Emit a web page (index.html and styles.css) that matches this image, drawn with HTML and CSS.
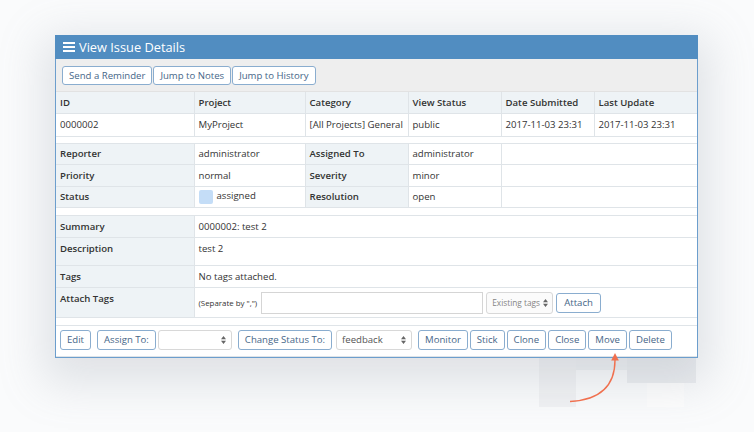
FILE: index.html
```html
<!DOCTYPE html>
<html lang="en">

<head>
  <meta charset="UTF-8">
  <meta name="viewport" content="width=device-width, initial-scale=1.0">
  <link rel="stylesheet" href="styles.css">
  <title>View Issue Details</title>
</head>

<body>
  <div class="blocks">
    <span class="blk b1"></span>
    <span class="blk b2"></span>
    <span class="blk b3"></span>
    <span class="blk b4"></span>
  </div>

  <div class="widget">
    <div class="widgetHeader">
      <svg class="menuIcon" width="12" height="10" viewBox="0 0 12 10">
        <rect x="0" y="0" width="12" height="2" fill="#fff"/>
        <rect x="0" y="4" width="12" height="2" fill="#fff"/>
        <rect x="0" y="8" width="12" height="2" fill="#fff"/>
      </svg>
      <span class="title">View Issue Details</span>
    </div>

    <div class="toolbar">
      <span class="btn">Send a Reminder</span>
      <span class="btn">Jump to Notes</span>
      <span class="btn">Jump to History</span>
    </div>

    <table class="details">
      <colgroup>
        <col style="width:138px">
        <col style="width:111px">
        <col style="width:103px">
        <col style="width:93px">
        <col style="width:93px">
        <col>
      </colgroup>
      <tr class="r21">
        <th>ID</th>
        <th>Project</th>
        <th>Category</th>
        <th>View Status</th>
        <th>Date Submitted</th>
        <th>Last Update</th>
      </tr>
      <tr class="r23">
        <td>0000002</td>
        <td>MyProject</td>
        <td>[All Projects] General</td>
        <td>public</td>
        <td>2017-11-03 23:31</td>
        <td>2017-11-03 23:31</td>
      </tr>
      <tr class="spacer s7"><td colspan="6"></td></tr>
      <tr class="r21">
        <th>Reporter</th>
        <td>administrator</td>
        <th>Assigned To</th>
        <td>administrator</td>
        <td colspan="2"></td>
      </tr>
      <tr class="r22">
        <th>Priority</th>
        <td>normal</td>
        <th>Severity</th>
        <td>minor</td>
        <td colspan="2"></td>
      </tr>
      <tr class="r21">
        <th>Status</th>
        <td><span class="swatch"></span>assigned</td>
        <th>Resolution</th>
        <td>open</td>
        <td colspan="2"></td>
      </tr>
      <tr class="spacer s8"><td colspan="6"></td></tr>
      <tr class="r22">
        <th>Summary</th>
        <td colspan="5">0000002: test 2</td>
      </tr>
      <tr class="r28 top">
        <th>Description</th>
        <td colspan="5">test 2</td>
      </tr>
      <tr class="r22">
        <th>Tags</th>
        <td colspan="5">No tags attached.</td>
      </tr>
      <tr class="r30 top">
        <th>Attach Tags</th>
        <td colspan="5" class="attachCell">
          <div class="attachForm">
            <span class="hint">(Separate by ",")</span>
            <span class="textInput"></span>
            <span class="select tagSelect"><span>Existing tags</span>
              <svg width="5" height="8" viewBox="0 0 5 8"><path d="M0 3.2 L2.5 0 L5 3.2Z M0 4.8 L2.5 8 L5 4.8Z" fill="#666"/></svg>
            </span>
            <span class="btn attachBtn">Attach</span>
          </div>
        </td>
      </tr>
      <tr class="spacer s8"><td colspan="6"></td></tr>
      <tr class="r31">
        <td colspan="6" class="actionCell">
          <div class="actions">
            <span class="btn">Edit</span>
            <span class="btn gapL">Assign To:</span>
            <span class="select blankSelect">
              <svg width="5" height="8" viewBox="0 0 5 8"><path d="M0 3.2 L2.5 0 L5 3.2Z M0 4.8 L2.5 8 L5 4.8Z" fill="#666"/></svg>
            </span>
            <span class="btn gapL">Change Status To:</span>
            <span class="select statusSelect"><span>feedback</span>
              <svg width="5" height="8" viewBox="0 0 5 8"><path d="M0 3.2 L2.5 0 L5 3.2Z M0 4.8 L2.5 8 L5 4.8Z" fill="#666"/></svg>
            </span>
            <span class="btn gapL">Monitor</span>
            <span class="btn">Stick</span>
            <span class="btn">Clone</span>
            <span class="btn">Close</span>
            <span class="btn">Move</span>
            <span class="btn">Delete</span>
          </div>
        </td>
      </tr>
    </table>
  </div>

  <svg class="pointer" width="70" height="62" viewBox="0 0 70 62">
    <path d="M10 56.5 C38 55 55 43 55 15" fill="none" stroke="#f0704f" stroke-width="1.4"/>
    <path d="M55 8 L51.2 15.5 L58.8 15.5Z" fill="#f0704f"/>
  </svg>
</body>

</html>
```

FILE: styles.css
```css
* {
  margin: 0;
  padding: 0;
  box-sizing: border-box;
}

body {
  position: relative;
  width: 754px;
  height: 432px;
  overflow: hidden;
  background: #fafbfc;
  font-family: "Open Sans", "Liberation Sans", sans-serif;
  font-size: 9.6px;
  color: #333;
  padding: 35px 0 0 55px;
}

.widget {
  position: relative;
  width: 643px;
  border: 1px solid #6c9ecd;
  border-top: none;
  background: #fff;
  box-shadow: 0 14px 42px 12px rgba(130, 140, 155, 0.22);
}

.widgetHeader {
  display: flex;
  align-items: center;
  height: 24px;
  margin: 0 -1px;
  padding-left: 8px;
  background-color: #518dc1;
  color: #fff;
}

.widgetHeader .menuIcon {
  margin-right: 4px;
}

.widgetHeader .title {
  font-size: 12.8px;
  line-height: 1;
}

.toolbar {
  display: flex;
  gap: 1px;
  height: 33px;
  padding: 7px 0 0 6px;
  background-color: #eeeeee;
  border-bottom: 1px solid #e2e2e2;
}

.btn {
  display: inline-flex;
  align-items: center;
  height: 19px;
  padding: 0 6px;
  border: 1px solid #8aadcf;
  border-radius: 3px;
  background-color: #fff;
  color: #466688;
  white-space: nowrap;
}

.details {
  width: 100%;
  border-collapse: collapse;
  table-layout: fixed;
}

.details th,
.details td {
  border: 1px solid #dfe4e8;
  padding: 0 4px;
  text-align: left;
  vertical-align: middle;
  white-space: nowrap;
  overflow: hidden;
}

.details tr:first-child th,
.details tr:first-child td {
  border-top: none;
}

.details th:first-child,
.details td:first-child {
  border-left: none;
}

.details th:last-child,
.details td:last-child {
  border-right: none;
}

.details th {
  background-color: #eef3f6;
  font-weight: 600;
}

.details .top th,
.details .top td {
  vertical-align: top;
  padding-top: 4px;
}

.details .r21 { height: 21px; }
.details .r22 { height: 22px; }
.details .r23 { height: 23px; }
.details .r28 { height: 28px; }
.details .r30 { height: 30px; }
.details .r31 { height: 31px; }
.details .s7 { height: 7px; }
.details .s8 { height: 8px; }

.details .spacer td {
  padding: 0;
  background: #fff;
}

.swatch {
  display: inline-block;
  width: 14px;
  height: 14px;
  margin-right: 4px;
  vertical-align: middle;
  border-radius: 2px;
  background-color: #c4ddf7;
}

.details .attachCell {
  padding-top: 3px;
}

.attachForm {
  display: flex;
  align-items: center;
}

.hint {
  font-size: 7.9px;
  margin-right: 4px;
}

.textInput {
  display: inline-block;
  width: 222px;
  height: 22px;
  border: 1px solid #d5d5d5;
  background: #fff;
  margin-right: 3px;
}

.select {
  display: inline-flex;
  align-items: center;
  justify-content: space-between;
  height: 20px;
  padding: 0 5px;
  border: 1px solid #d8d8d8;
  border-radius: 3px;
  background-color: #fff;
  color: #555;
  white-space: nowrap;
}

.tagSelect {
  width: 67px;
  height: 22px;
  padding: 0 4px 0 5px;
  font-size: 8.3px;
  color: #858585;
  background-color: #fbfbfb;
  margin-right: 3px;
}

.tagSelect svg {
  flex-shrink: 0;
  margin-left: 2px;
}

.attachBtn {
  height: 20px;
  padding: 0 7px;
}

.details .actionCell {
  padding: 4px 0 0 4px;
  vertical-align: top;
}

.actions {
  display: flex;
  gap: 2px;
}

.actions .btn {
  height: 20px;
}

.actions .gapL {
  margin-left: 4px;
}

.blankSelect {
  width: 74px;
  justify-content: flex-end;
}

.statusSelect {
  width: 76px;
  margin-left: 2px;
}

.pointer {
  position: absolute;
  left: 560px;
  top: 345px;
}

.blocks .blk {
  position: absolute;
  display: block;
  z-index: -1;
}

.blocks .b1 {
  left: 539px;
  top: 356px;
  width: 37px;
  height: 51px;
  background: #f1f2f4;
}

.blocks .b2 {
  left: 576px;
  top: 356px;
  width: 51px;
  height: 14px;
  background: #eff1f3;
}

.blocks .b3 {
  left: 627px;
  top: 356px;
  width: 69px;
  height: 27px;
  background: #ebedf0;
}

.blocks .b4 {
  left: 647px;
  top: 383px;
  width: 37px;
  height: 24px;
  background: #fdfdfd;
}
```
